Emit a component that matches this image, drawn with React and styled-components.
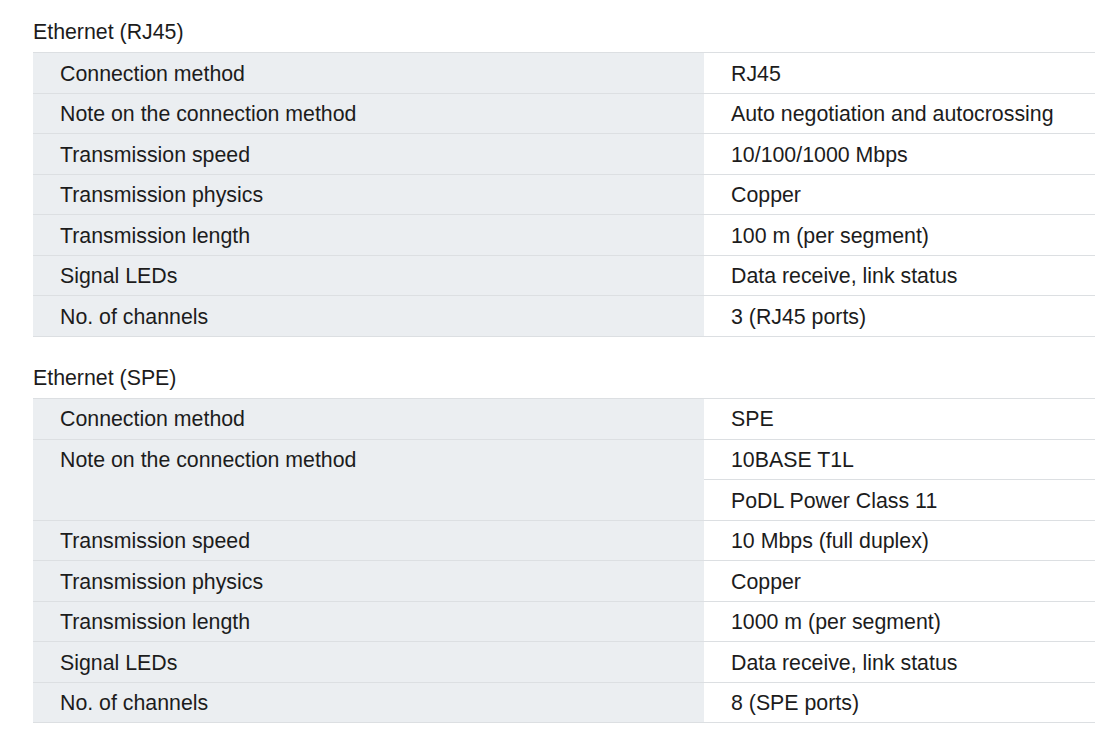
import React from 'react';
import styled, { createGlobalStyle } from 'styled-components';

const GlobalStyle = createGlobalStyle`
  body {
    margin: 0;
    background: #ffffff;
    font-family: "Liberation Sans", Arial, Helvetica, sans-serif;
    color: #1c1c1c;
  }
`;

const Page = styled.div`
  padding: 12px 0 0 33px;
  display: flex;
  flex-direction: column;
  gap: 21px;
`;

const Section = styled.section`
  display: flex;
  flex-direction: column;
`;

const Heading = styled.h3`
  margin: 0;
  font-size: 21.33px;
  font-weight: 400;
  line-height: 40px;
  height: 40px;
`;

const Table = styled.table`
  width: 1062px;
  border-collapse: separate;
  border-spacing: 0;
  table-layout: fixed;
  font-size: 21.33px;
`;

const Cell = styled.td`
  box-sizing: border-box;
  padding: 1.5px 27px 0;
  line-height: 38.07px;
  border-top: 1px solid #dcdfe2;
  vertical-align: top;
  white-space: nowrap;
  background: ${({ $label }) => ($label ? '#ebeef1' : '#ffffff')};
  width: ${({ $label }) => ($label ? '671px' : 'auto')};

  tr:last-child > & {
    border-bottom: 1px solid #dcdfe2;
  }
`;

const rj45 = [
  ['Connection method', ['RJ45']],
  ['Note on the connection method', ['Auto negotiation and autocrossing']],
  ['Transmission speed', ['10/100/1000 Mbps']],
  ['Transmission physics', ['Copper']],
  ['Transmission length', ['100 m (per segment)']],
  ['Signal LEDs', ['Data receive, link status']],
  ['No. of channels', ['3 (RJ45 ports)']],
];

const spe = [
  ['Connection method', ['SPE']],
  ['Note on the connection method', ['10BASE T1L', 'PoDL Power Class 11']],
  ['Transmission speed', ['10 Mbps (full duplex)']],
  ['Transmission physics', ['Copper']],
  ['Transmission length', ['1000 m (per segment)']],
  ['Signal LEDs', ['Data receive, link status']],
  ['No. of channels', ['8 (SPE ports)']],
];

const SpecTable = ({ title, rows }) => (
  <Section>
    <Heading>{title}</Heading>
    <Table>
      <tbody>
        {rows.flatMap(([label, values]) =>
          values.map((value, i) => (
            <tr key={label + i}>
              {i === 0 && (
                <Cell $label rowSpan={values.length}>
                  {label}
                </Cell>
              )}
              <Cell>{value}</Cell>
            </tr>
          ))
        )}
      </tbody>
    </Table>
  </Section>
);

const App = () => (
  <>
    <GlobalStyle />
    <Page>
      <SpecTable title="Ethernet (RJ45)" rows={rj45} />
      <SpecTable title="Ethernet (SPE)" rows={spe} />
    </Page>
  </>
);

export default App;
